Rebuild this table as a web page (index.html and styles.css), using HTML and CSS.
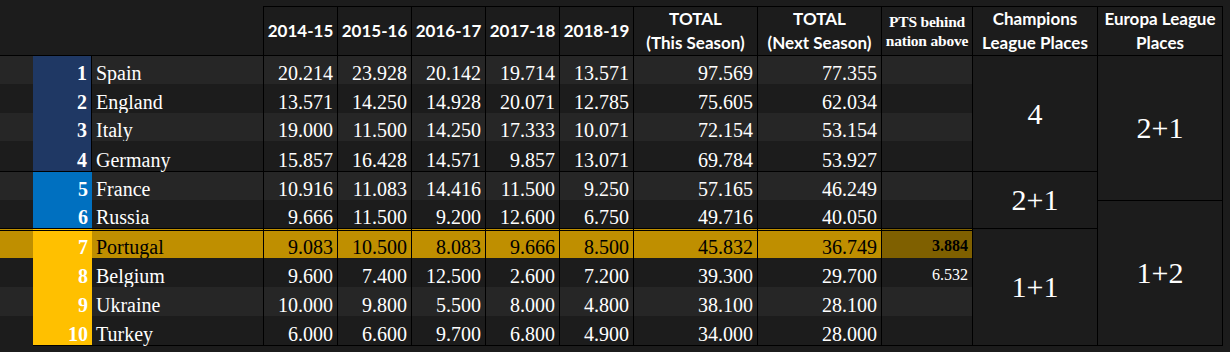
FILE: index.html
```html
<!DOCTYPE html>
<html lang="en">
<head>
  <meta charset="UTF-8">
  <title>UEFA Country Coefficients</title>
  <link rel="stylesheet" href="styles.css">
</head>
<body>
  <div class="sheet">
    <div class="standings">
      <!-- header -->
      <div class="head blank"></div>
      <div class="head blank"></div>
      <div class="head blank"></div>
      <div class="head">2014-15</div>
      <div class="head">2015-16</div>
      <div class="head">2016-17</div>
      <div class="head">2017-18</div>
      <div class="head">2018-19</div>
      <div class="head">TOTAL<br>(This Season)</div>
      <div class="head">TOTAL<br>(Next Season)</div>
      <div class="head pts-head">PTS behind<br>nation above</div>
      <div class="head">Champions<br>League Places</div>
      <div class="head last-col">Europa League<br>Places</div>

      <!-- merged place cells -->
      <div class="places cl cl-1">4</div>
      <div class="places cl cl-2">2+1</div>
      <div class="places cl cl-3">1+1</div>
      <div class="places el el-1">2+1</div>
      <div class="places el el-2">1+2</div>

      <div class="row light">
        <div class="cell pad"></div>
        <div class="cell rank navy">1</div>
        <div class="cell name">Spain</div>
        <div class="cell num">20.214</div>
        <div class="cell num">23.928</div>
        <div class="cell num">20.142</div>
        <div class="cell num">19.714</div>
        <div class="cell num">13.571</div>
        <div class="cell num">97.569</div>
        <div class="cell num">77.355</div>
        <div class="cell num pts"></div>
      </div>
      <div class="row dark">
        <div class="cell pad"></div>
        <div class="cell rank navy">2</div>
        <div class="cell name">England</div>
        <div class="cell num">13.571</div>
        <div class="cell num">14.250</div>
        <div class="cell num">14.928</div>
        <div class="cell num">20.071</div>
        <div class="cell num">12.785</div>
        <div class="cell num">75.605</div>
        <div class="cell num">62.034</div>
        <div class="cell num pts"></div>
      </div>
      <div class="row light">
        <div class="cell pad"></div>
        <div class="cell rank navy">3</div>
        <div class="cell name">Italy</div>
        <div class="cell num">19.000</div>
        <div class="cell num">11.500</div>
        <div class="cell num">14.250</div>
        <div class="cell num">17.333</div>
        <div class="cell num">10.071</div>
        <div class="cell num">72.154</div>
        <div class="cell num">53.154</div>
        <div class="cell num pts"></div>
      </div>
      <div class="row dark sep">
        <div class="cell pad"></div>
        <div class="cell rank navy">4</div>
        <div class="cell name">Germany</div>
        <div class="cell num">15.857</div>
        <div class="cell num">16.428</div>
        <div class="cell num">14.571</div>
        <div class="cell num">9.857</div>
        <div class="cell num">13.071</div>
        <div class="cell num">69.784</div>
        <div class="cell num">53.927</div>
        <div class="cell num pts"></div>
      </div>
      <div class="row light">
        <div class="cell pad"></div>
        <div class="cell rank blue">5</div>
        <div class="cell name">France</div>
        <div class="cell num">10.916</div>
        <div class="cell num">11.083</div>
        <div class="cell num">14.416</div>
        <div class="cell num">11.500</div>
        <div class="cell num">9.250</div>
        <div class="cell num">57.165</div>
        <div class="cell num">46.249</div>
        <div class="cell num pts"></div>
      </div>
      <div class="row dark">
        <div class="cell pad"></div>
        <div class="cell rank blue">6</div>
        <div class="cell name">Russia</div>
        <div class="cell num">9.666</div>
        <div class="cell num">11.500</div>
        <div class="cell num">9.200</div>
        <div class="cell num">12.600</div>
        <div class="cell num">6.750</div>
        <div class="cell num">49.716</div>
        <div class="cell num">40.050</div>
        <div class="cell num pts"></div>
      </div>
      <div class="row highlight">
        <div class="cell pad"></div>
        <div class="cell rank gold">7</div>
        <div class="cell name">Portugal</div>
        <div class="cell num">9.083</div>
        <div class="cell num">10.500</div>
        <div class="cell num">8.083</div>
        <div class="cell num">9.666</div>
        <div class="cell num">8.500</div>
        <div class="cell num">45.832</div>
        <div class="cell num">36.749</div>
        <div class="cell num pts">3.884</div>
      </div>
      <div class="row dark">
        <div class="cell pad"></div>
        <div class="cell rank gold">8</div>
        <div class="cell name">Belgium</div>
        <div class="cell num">9.600</div>
        <div class="cell num">7.400</div>
        <div class="cell num">12.500</div>
        <div class="cell num">2.600</div>
        <div class="cell num">7.200</div>
        <div class="cell num">39.300</div>
        <div class="cell num">29.700</div>
        <div class="cell num pts">6.532</div>
      </div>
      <div class="row light">
        <div class="cell pad"></div>
        <div class="cell rank gold">9</div>
        <div class="cell name">Ukraine</div>
        <div class="cell num">10.000</div>
        <div class="cell num">9.800</div>
        <div class="cell num">5.500</div>
        <div class="cell num">8.000</div>
        <div class="cell num">4.800</div>
        <div class="cell num">38.100</div>
        <div class="cell num">28.100</div>
        <div class="cell num pts"></div>
      </div>
      <div class="row dark bottom">
        <div class="cell pad"></div>
        <div class="cell rank gold">10</div>
        <div class="cell name">Turkey</div>
        <div class="cell num">6.000</div>
        <div class="cell num">6.600</div>
        <div class="cell num">9.700</div>
        <div class="cell num">6.800</div>
        <div class="cell num">4.900</div>
        <div class="cell num">34.000</div>
        <div class="cell num">28.000</div>
        <div class="cell num pts"></div>
      </div>
    </div>
  </div>
</body>
</html>
```

FILE: styles.css
```css
body {
  margin: 0;
  background-color: #1c1c1c;
  color: #fff;
  font-family: "Liberation Serif", "Times New Roman", serif;
}

.sheet {
  padding-top: 6px;
  height: 346px;
}

.standings {
  display: grid;
  grid-template-columns: 33px 59px 171px 74px 74px 74px 74px 74px 124px 124px 91px 125px 126px;
  grid-template-rows: 50px 28px 29px 28px 31px 28px 28px 30px 29px 29px 30px;
}

.row {
  display: contents;
}

/* header */

.head {
  box-sizing: border-box;
  display: flex;
  align-items: center;
  justify-content: center;
  text-align: center;
  font-family: Lato, "Liberation Sans", sans-serif;
  font-weight: bold;
  font-size: 17px;
  line-height: 24px;
  background-color: #1c1c1c;
  border-top: 1px solid #000;
  border-left: 1px solid #000;
  border-bottom: 1px solid #000;
}

.head.blank {
  border-top-color: transparent;
  border-left: none;
}

.head.last-col {
  border-right: 1px solid #000;
}

.head.pts-head {
  font-family: "Liberation Serif", "Times New Roman", serif;
  font-size: 15.5px;
  line-height: 19px;
  letter-spacing: -0.2px;
}

/* body cells */

.cell {
  box-sizing: border-box;
  display: flex;
  align-items: flex-end;
  justify-content: flex-end;
  padding: 0 4px;
  font-size: 20px;
  line-height: 22px;
  white-space: nowrap;
}

.light .cell {
  background-color: #262626;
}

.dark .cell {
  background-color: #1c1c1c;
}

.cell.name {
  justify-content: flex-start;
}

.cell.num {
  border-left: 1px solid #000;
}

.cell.rank {
  font-weight: bold;
}

.cell.pts {
  font-size: 16px;
  line-height: 20px;
  padding-bottom: 2px;
}

.row .navy {
  background-color: #1f3864;
  border-right: 1px solid #000;
}

.row .blue {
  background-color: #0070c0;
}

.row .gold {
  background-color: #ffc000;
}

.sep .cell {
  border-bottom: 1px solid #000;
}

.highlight .cell {
  background-color: #bf8f00;
  color: #000;
  border-top: 3px double #000;
}

.highlight .cell.rank {
  background-color: #ffc000;
  color: #fff;
}

.highlight .cell.pts {
  background-color: #7f6000;
  font-weight: bold;
}

.bottom .cell:not(.pad) {
  border-bottom: 1px solid #000;
}

/* merged places */

.places {
  box-sizing: border-box;
  display: flex;
  align-items: center;
  justify-content: center;
  font-size: 30px;
  background-color: #1c1c1c;
  border-left: 1px solid #000;
}

.cl {
  grid-column: 12;
}

.el {
  grid-column: 13;
  border-right: 1px solid #000;
}

.cl-1 {
  grid-row: 2 / span 4;
  border-bottom: 1px solid #000;
}

.cl-2 {
  grid-row: 6 / span 2;
}

.cl-3 {
  grid-row: 8 / span 4;
  border-top: 1px solid #000;
  border-bottom: 1px solid #000;
}

.el-1 {
  grid-row: 2 / span 5;
}

.el-2 {
  grid-row: 7 / span 5;
  border-top: 1px solid #000;
  border-bottom: 1px solid #000;
}
```
